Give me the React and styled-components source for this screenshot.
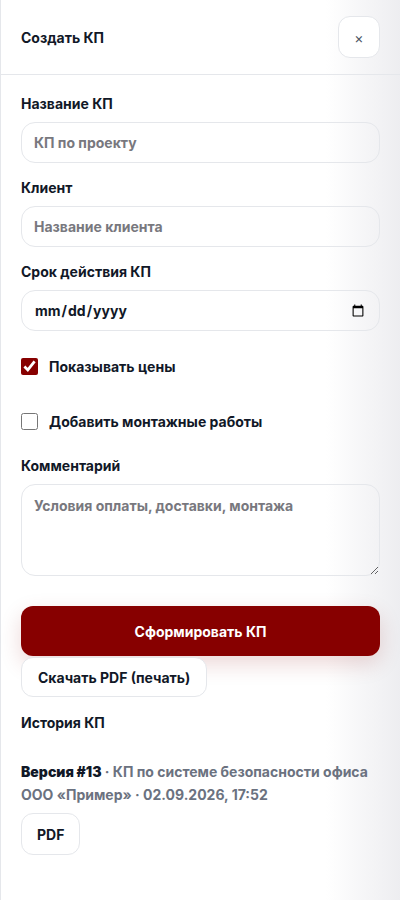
import React, { useState } from 'react';
import styled, { createGlobalStyle } from 'styled-components';

const GlobalStyle = createGlobalStyle`
  * { box-sizing: border-box; }
  body {
    margin: 0;
    background: #fff;
    font-family: Inter, "Noto Sans", sans-serif;
    color: #111827;
  }
`;

const Panel = styled.aside`
  width: 400px;
  min-height: 900px;
  border-left: 1px solid #e5e7eb;
  /* soft fade at the right edge */
  background: linear-gradient(to right, #fff 0, #fff 325px, #ededf0 400px);
`;

const Header = styled.header`
  display: flex;
  align-items: center;
  justify-content: space-between;
  padding: 16px 20px 16px 20px;
  border-bottom: 1px solid #e5e7eb;
`;

const Title = styled.h2`
  margin: 0;
  font-size: 14px;
  font-weight: 700;
  color: #111827;
`;

const CloseBtn = styled.button`
  width: 42px;
  height: 42px;
  border: 1px solid #e5e7eb;
  border-radius: 12px;
  background: #fff;
  color: #4b5563;
  font-family: inherit;
  font-size: 14px;
  cursor: pointer;
`;

const Body = styled.div`
  padding: 19px 20px 40px 20px;
`;

const Form = styled.div`
  display: flex;
  flex-direction: column;
  gap: 15px;
`;

const Field = styled.label`
  display: flex;
  flex-direction: column;
  gap: 8px;
`;

const Label = styled.span`
  font-size: 14px;
  line-height: 20px;
  font-weight: 700;
  color: #111827;
`;

const Input = styled.input`
  height: 41px;
  width: 100%;
  padding: 0 12px;
  border: 1px solid #e5e7eb;
  border-radius: 14px;
  background: transparent;
  font-family: inherit;
  font-size: 14px;
  font-weight: 700;
  color: #111827;
  outline: none;

  &::placeholder {
    color: #78787e;
    font-weight: 700;
  }
`;

const TextArea = styled.textarea`
  height: 92px;
  width: 100%;
  padding: 12px;
  border: 1px solid #e5e7eb;
  border-radius: 14px;
  background: transparent;
  font-family: inherit;
  font-size: 14px;
  font-weight: 700;
  color: #111827;
  outline: none;
  resize: vertical;

  &::placeholder {
    color: #78787e;
    font-weight: 700;
  }
`;

const CheckRow = styled.label`
  display: flex;
  align-items: center;
  gap: 11px;
  height: 40px;
  font-size: 14px;
  font-weight: 700;
  color: #111827;
  cursor: pointer;
`;

const Check = styled.input`
  width: 17px;
  height: 17px;
  margin: 0;
  accent-color: #870000;
`;

const PrimaryBtn = styled.button`
  margin-top: 30px;
  width: 100%;
  height: 50px;
  border: none;
  border-radius: 12px;
  background: #870000;
  color: #fff;
  font-family: inherit;
  font-size: 14px;
  font-weight: 700;
  box-shadow: 0 8px 22px rgba(135, 0, 0, 0.16);
  cursor: pointer;
`;

const GhostBtn = styled.button`
  height: ${({ $tall }) => ($tall ? '42px' : '40px')};
  padding: 0 ${({ $tall }) => ($tall ? '15px' : '16px')};
  border: 1px solid #e5e7eb;
  border-radius: 12px;
  background: #fff;
  color: #111827;
  font-family: inherit;
  font-size: 14px;
  font-weight: 700;
  cursor: pointer;
`;

const Actions = styled.div`
  display: flex;
  flex-direction: column;
  align-items: flex-start;
  gap: 1px;
`;

const SectionTitle = styled.h3`
  margin: 16px 0 0 0;
  font-size: 14px;
  line-height: 20px;
  font-weight: 700;
  color: #111827;
`;

const Version = styled.div`
  margin-top: 27px;
  display: flex;
  flex-direction: column;
  align-items: flex-start;
  gap: 7px;
`;

const VersionText = styled.p`
  margin: 0;
  font-size: 14px;
  line-height: 23px;
  font-weight: 700;
  color: #6b7280;

  b {
    color: #111827;
  }
`;

export default function App() {
  const [showPrices, setShowPrices] = useState(true);
  const [install, setInstall] = useState(false);

  return (
    <>
      <GlobalStyle />
      <Panel>
        <Header>
          <Title>Создать КП</Title>
          <CloseBtn aria-label="Закрыть">×</CloseBtn>
        </Header>
        <Body>
          <Form>
            <Field>
              <Label>Название КП</Label>
              <Input placeholder="КП по проекту" />
            </Field>
            <Field>
              <Label>Клиент</Label>
              <Input placeholder="Название клиента" />
            </Field>
            <Field>
              <Label>Срок действия КП</Label>
              <Input type="date" />
            </Field>
            <CheckRow>
              <Check type="checkbox" checked={showPrices} onChange={e => setShowPrices(e.target.checked)} />
              Показывать цены
            </CheckRow>
            <CheckRow>
              <Check type="checkbox" checked={install} onChange={e => setInstall(e.target.checked)} />
              Добавить монтажные работы
            </CheckRow>
            <Field>
              <Label>Комментарий</Label>
              <TextArea placeholder="Условия оплаты, доставки, монтажа" />
            </Field>
          </Form>

          <Actions>
            <PrimaryBtn>Сформировать КП</PrimaryBtn>
            <GhostBtn>Скачать PDF (печать)</GhostBtn>
          </Actions>

          <SectionTitle>История КП</SectionTitle>
          <Version>
            <VersionText>
              <b>Версия #13</b> · КП по системе безопасности офиса ООО «Пример» · 02.09.2026, 17:52
            </VersionText>
            <GhostBtn $tall>PDF</GhostBtn>
          </Version>
        </Body>
      </Panel>
    </>
  );
}
